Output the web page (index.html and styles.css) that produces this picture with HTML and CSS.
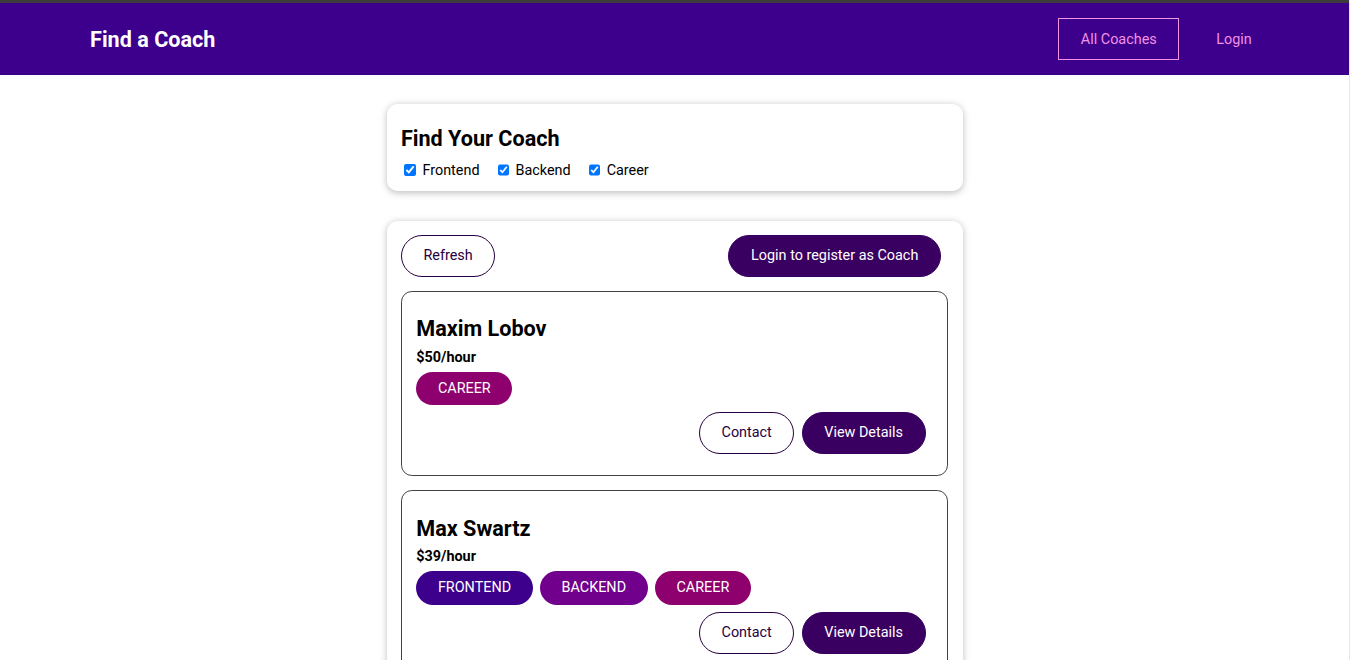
FILE: index.html
```html
<!DOCTYPE html>
<html lang="en">
<head>
<meta charset="utf-8">
<title>Find a Coach</title>
<link rel="stylesheet" href="styles.css">
</head>
<body>
<div class="topline"></div>
<header class="header">
  <nav class="nav">
    <h1 class="brand"><a href="#">Find a Coach</a></h1>
    <ul class="menu">
      <li><a href="#" class="nav-link active">All Coaches</a></li>
      <li><a href="#" class="nav-link">Login</a></li>
    </ul>
  </nav>
</header>
<main>
  <section class="card filter">
    <h2 class="filter-title">Find Your Coach</h2>
    <div class="filter-options">
      <span class="filter-option"><input type="checkbox" id="frontend" checked><label for="frontend">Frontend</label></span>
      <span class="filter-option"><input type="checkbox" id="backend" checked><label for="backend">Backend</label></span>
      <span class="filter-option"><input type="checkbox" id="career" checked><label for="career">Career</label></span>
    </div>
  </section>
  <section class="card list-card">
    <div class="controls">
      <button class="btn outline">Refresh</button>
      <button class="btn">Login to register as Coach</button>
    </div>
    <ul class="coach-list">
      <li class="coach">
        <h3 class="coach-name">Maxim Lobov</h3>
        <h4 class="coach-rate">$50/hour</h4>
        <div class="badges">
          <span class="badge career">Career</span>
        </div>
        <div class="actions">
          <button class="btn outline">Contact</button>
          <button class="btn">View Details</button>
        </div>
      </li>
      <li class="coach">
        <h3 class="coach-name">Max Swartz</h3>
        <h4 class="coach-rate">$39/hour</h4>
        <div class="badges">
          <span class="badge frontend">Frontend</span><span class="badge backend">Backend</span><span class="badge career">Career</span>
        </div>
        <div class="actions">
          <button class="btn outline">Contact</button>
          <button class="btn">View Details</button>
        </div>
      </li>
    </ul>
  </section>
</main>
</body>
</html>
```
FILE: styles.css
```css
* { box-sizing: border-box; }
html { background: #fff; }
body {
  margin: 0;
  font-family: Roboto, "Liberation Sans", sans-serif;
  font-size: 14.4px;
  line-height: 17px;
  color: #000;
  border-right: 1px solid #e6e6e6;
  min-height: 660px;
}
.topline { height: 3px; background: #3c3c3c; }
.header {
  height: 72px;
  background: #3d008d;
  display: flex;
  align-items: center;
}
.nav {
  width: 90%;
  margin: 0 auto;
  display: flex;
  justify-content: space-between;
  align-items: center;
}
.brand { margin: 0; font-size: 21.6px; line-height: 25px; font-weight: 700; }
.brand a {
  color: #fff;
  text-decoration: none;
  display: inline-block;
  padding: 10.8px 21.6px 10.8px 22.6px;
}
.menu { list-style: none; margin: 0; padding: 0; display: flex; align-items: center; }
.menu li { margin: 0 7.2px; }
.nav-link {
  display: inline-block;
  color: #f391e3;
  text-decoration: none;
  padding: 11.8px 21.6px;
  border: 1px solid transparent;
}
.nav-link.active { border-color: #f391e3; }

main { padding-top: 0.1px; }
.card {
  width: 576px;
  margin: 28.8px auto;
  padding: 14.4px;
  border-radius: 10.8px;
  background: #fff;
  box-shadow: 0 1.8px 7.2px rgba(0, 0, 0, 0.26);
}
.filter { padding-bottom: 12.4px; }
.list-card { margin-top: 30px; }
.filter-title { margin: 7.2px 0; font-size: 21.6px; line-height: 27px; font-weight: 700; }
.filter-options { display: flex; align-items: center; height: 19px; padding-top: 2px; }
.filter-option { display: inline-flex; align-items: center; margin-right: 14.4px; }
.filter-option input {
  width: 11.7px; height: 11.7px;
  margin: 0 2.7px 0 3.6px;
  accent-color: #0075ff;
}
.filter-option label { margin-left: 3.6px; }

.controls { display: flex; justify-content: space-between; }
.btn {
  font: inherit;
  line-height: 18.4px;
  padding: 10.8px 21.6px;
  margin-right: 7.2px;
  background: #3a0061;
  border: 1px solid #3a0061;
  color: #fff;
  border-radius: 30px;
  cursor: pointer;
}
.btn.outline { background: transparent; border-color: #270041; color: #270041; }

.coach-list { list-style: none; margin: 0; padding: 0; }
.coach {
  margin: 14.4px 0;
  border: 1px solid #424242;
  border-radius: 10.8px;
  padding: 14.4px;
}
.coach:first-child { margin-top: 13.4px; }
.coach:last-child { margin-bottom: 0; }
.coach-name { margin: 9.2px 0 6.2px; font-size: 21.6px; line-height: 27px; font-weight: 700; }
.coach-rate { margin: 6.2px 0 0; font-size: 14.4px; line-height: 17px; font-weight: 700; }
.badges { margin: 6.2px 0 7.2px; display: flex; }
.badge {
  display: inline-block;
  padding: 7.2px 21.6px;
  line-height: 19px;
  margin-right: 7.2px;
  border-radius: 30px;
  color: #fff;
  text-transform: uppercase;
}
.badge.frontend { background: #3d008d; }
.badge.backend { background: #71008d; }
.badge.career { background: #8d006e; }
.actions { margin: 7.2px 0 6.2px; display: flex; justify-content: flex-end; }
```
